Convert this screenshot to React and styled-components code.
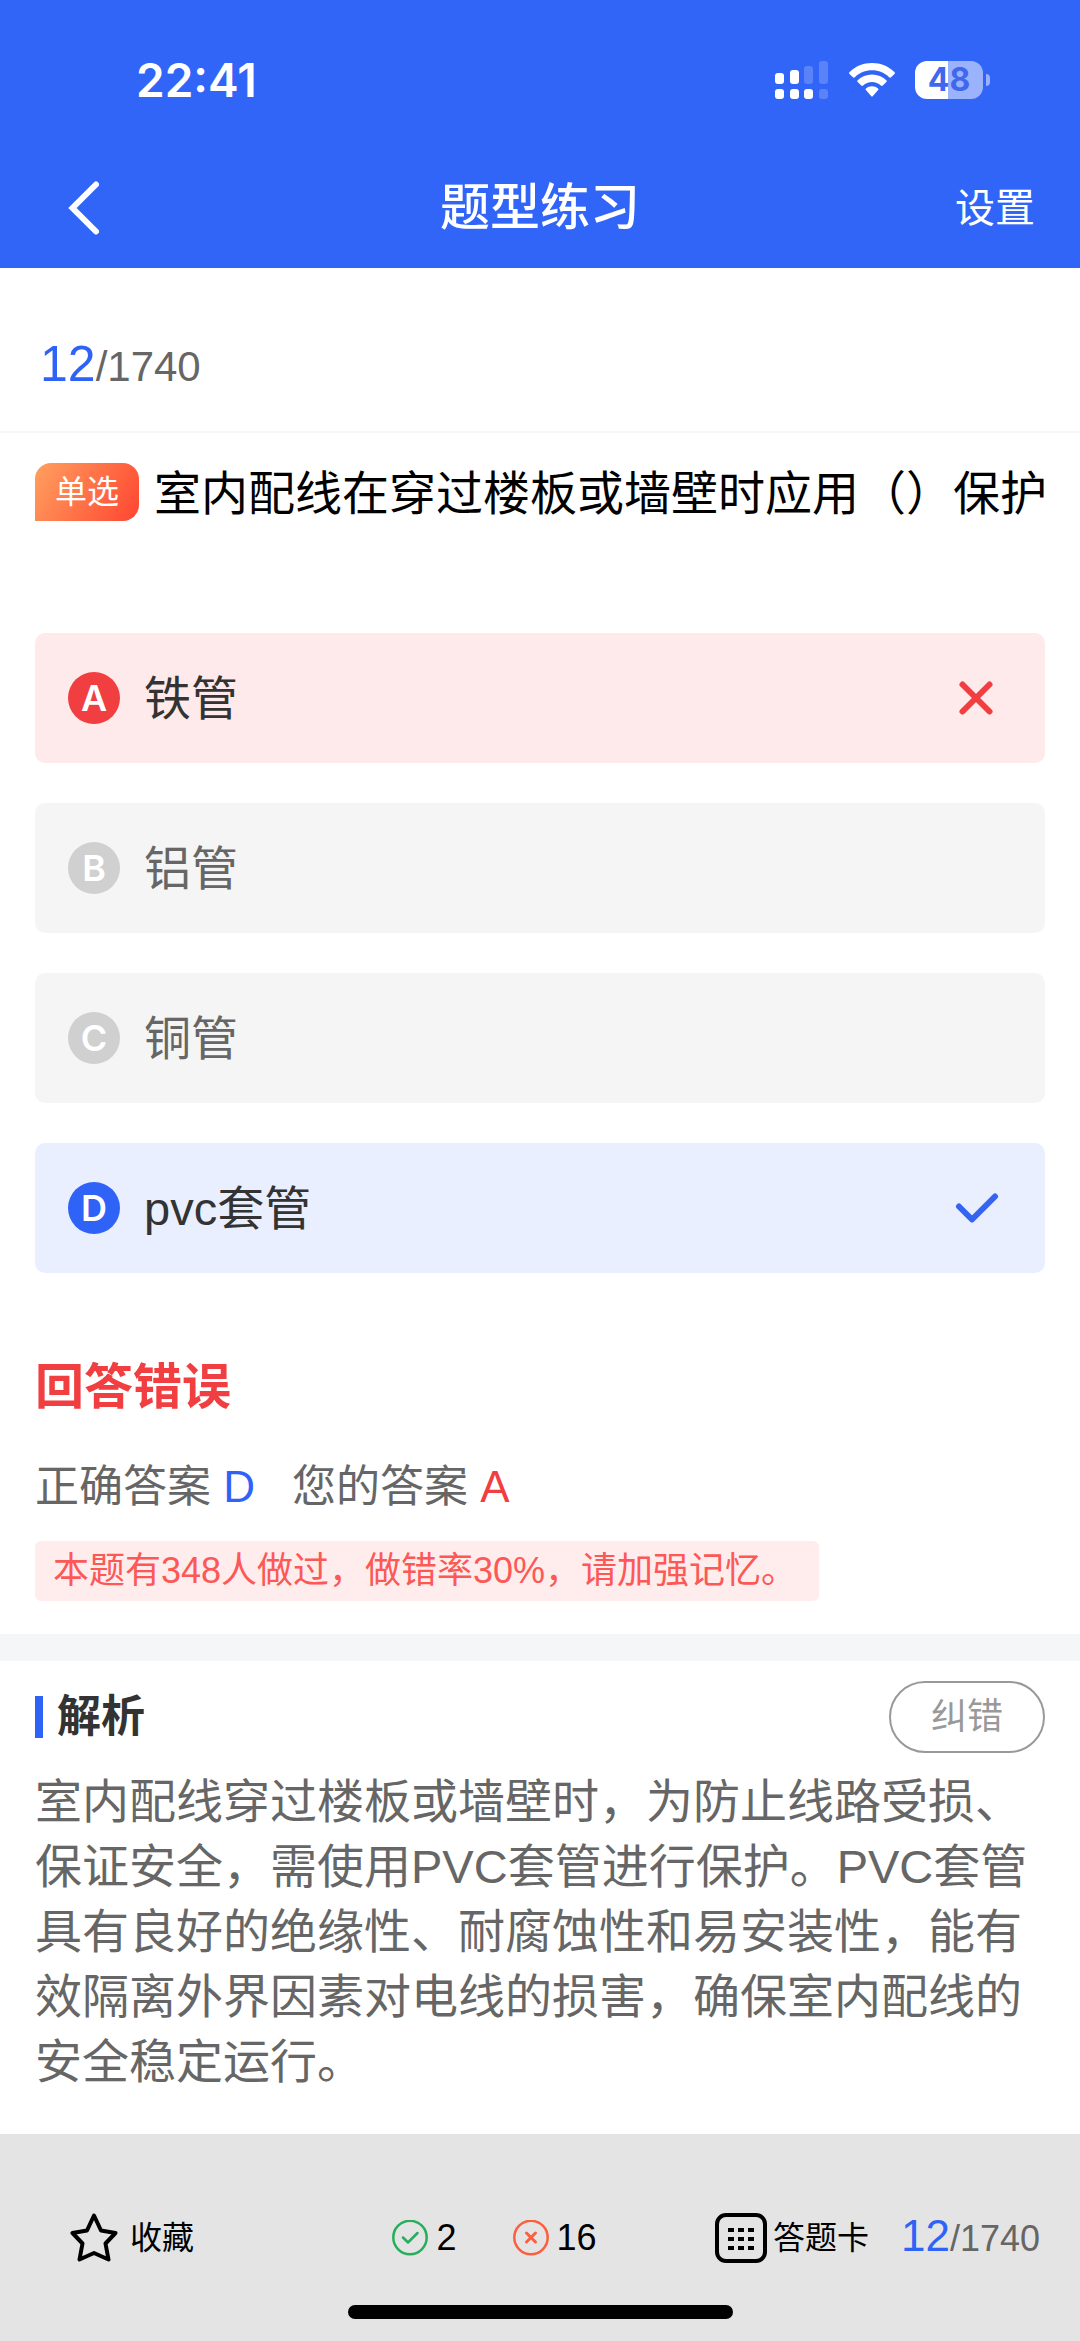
import styled, { createGlobalStyle } from 'styled-components';

const question = {
  index: 12,
  total: 1740,
  type: '单选',
  title: '室内配线在穿过楼板或墙壁时应用（）保护',
  options: [
    { key: 'A', text: '铁管', state: 'wrong' },
    { key: 'B', text: '铝管', state: 'idle' },
    { key: 'C', text: '铜管', state: 'idle' },
    { key: 'D', text: 'pvc套管', state: 'right' },
  ],
  answer: 'D',
  chosen: 'A',
  notice: '本题有348人做过，做错率30%，请加强记忆。',
  analysis:
    '室内配线穿过楼板或墙壁时，为防止线路受损、保证安全，需使用PVC套管进行保护。PVC套管具有良好的绝缘性、耐腐蚀性和易安装性，能有效隔离外界因素对电线的损害，确保室内配线的安全稳定运行。',
};

const optionColors = {
  wrong: { background: '#feeaea', badge: '#f03e41', text: '#333' },
  right: { background: '#e9effe', badge: '#2f63f7', text: '#333' },
  idle: { background: '#f5f5f5', badge: '#d0d0d0', text: '#666' },
};

const SignalIcon = () => (
  <svg width="54" height="38" viewBox="0 0 54 38" fill="#fff" aria-hidden="true">
    <rect x="0" y="12" width="9" height="11" rx="3" />
    <rect x="15" y="9" width="9" height="14" rx="3" />
    <rect x="29" y="5" width="9" height="18" rx="3" opacity=".2" />
    <rect x="44" y="0" width="9" height="23" rx="3" opacity=".2" />
    <rect x="0" y="28" width="9" height="10" rx="3" />
    <rect x="15" y="28" width="9" height="10" rx="3" />
    <rect x="29" y="28" width="9" height="10" rx="3" />
    <rect x="44" y="28" width="9" height="10" rx="3" opacity=".2" />
  </svg>
);

const WifiIcon = () => (
  <svg width="46" height="34" viewBox="0 0 46 34" fill="#fff" aria-hidden="true">
    <path d="M23 0C14.400 0 6.500 3.300 .600 8.900c-.700.700-.700 1.400-.100 2l3.400 3.300c.600.600 1.300.600 2 0C10.400 9.900 16.400 7.300 23 7.300s12.600 2.600 17.100 6.900c.700.600 1.400.600 2 0l3.400-3.300c.600-.600.600-1.300-.100-2C39.500 3.300 31.600 0 23 0z" />
    <path d="M23 11.600c-5.500 0-10.500 2.100-14.300 5.600-.600.600-.600 1.300 0 1.900l3.500 3.400c.600.600 1.300.600 1.900.1 2.400-2.200 5.500-3.500 8.900-3.500s6.500 1.300 8.900 3.500c.600.500 1.300.500 1.900-.1l3.500-3.400c.600-.600.600-1.300 0-1.900-3.800-3.500-8.800-5.600-14.300-5.600z" />
    <path d="M23 23.200c-2.300 0-4.400.800-6 2.200-.600.500-.600 1.200-.100 1.700l5.200 5.800c.600.700 1.200.700 1.800 0l5.200-5.800c.500-.500.500-1.200-.100-1.700-1.600-1.400-3.700-2.200-6-2.200z" />
  </svg>
);

const BackIcon = () => (
  <svg width="32" height="54" viewBox="0 0 32 54" fill="none" stroke="#fff" strokeWidth="6" strokeLinecap="round" aria-hidden="true">
    <path d="M29 3.500 5.500 27 29 50.500" />
  </svg>
);

const CrossIcon = () => (
  <svg width="44" height="44" viewBox="0 0 44 44" fill="none" stroke="#f03e41" strokeWidth="6" strokeLinecap="round" role="img" aria-label="错误">
    <path d="M7.500 8.500 34.500 35.500M34.500 8.500 7.500 35.500" />
  </svg>
);

const TickIcon = () => (
  <svg width="44" height="44" viewBox="0 0 44 44" fill="none" stroke="#3563f2" strokeWidth="6" strokeLinecap="round" strokeLinejoin="round" role="img" aria-label="正确">
    <path d="M4 20.500 17 33.500 40 10.500" />
  </svg>
);

const StarIcon = () => (
  <svg width="48" height="50" viewBox="0 0 48 50" fill="none" stroke="#000" strokeWidth="4" strokeLinejoin="round" aria-hidden="true">
    <path d="M24 2.500 31 17.500 45.500 20 35.500 30.500 38.500 46.500 24 40 9.500 46.500 12.500 30.500 2.500 20 17 17.500z" />
  </svg>
);

const RightCountIcon = () => (
  <svg width="36" height="36" viewBox="0 0 36 36" fill="none" stroke="#27ae5b" strokeWidth="2.500" strokeLinecap="round" strokeLinejoin="round" role="img" aria-label="答对">
    <circle cx="18" cy="17.500" r="16.700" />
    <path d="M11 17.500 16 22.500 25.500 13" />
  </svg>
);

const WrongCountIcon = () => (
  <svg width="36" height="36" viewBox="0 0 36 36" fill="none" stroke="#fb5f3e" strokeWidth="2.500" strokeLinecap="round" role="img" aria-label="答错">
    <circle cx="18" cy="17.500" r="16.700" />
    <path d="M13.500 13 22.500 22M22.500 13 13.500 22" strokeWidth="3" />
  </svg>
);

const CardIcon = () => (
  <svg width="52" height="50" viewBox="0 0 52 50" aria-hidden="true">
    <rect x="2" y="2" width="48" height="46" rx="9" fill="none" stroke="#000" strokeWidth="4" />
    {[15, 24, 33].map((y) =>
      [13, 23, 33].map((x) => <rect key={`${x}-${y}`} x={x} y={y} width="6" height="4" />)
    )}
  </svg>
);

const Progress = ({ size }) => (
  <Counter $size={size}>
    <em>{question.index}</em>/{question.total}
  </Counter>
);

const App = () => (
  <Page lang="zh-CN">
    <GlobalStyle />
    <Header>
      <StatusBar>
        <Time>22:41</Time>
        <StatusIcons>
          <SignalIcon />
          <WifiIcon />
          <Battery>
            <BatteryBody>48</BatteryBody>
            <BatteryCap />
          </Battery>
        </StatusIcons>
      </StatusBar>
      <NavBar>
        <BackButton type="button" aria-label="返回">
          <BackIcon />
        </BackButton>
        <Title>题型练习</Title>
        <SettingsButton type="button">设置</SettingsButton>
      </NavBar>
    </Header>

    <main>
      <ProgressBar>
        <Progress size="large" />
      </ProgressBar>

      <Question>
        <TypeBadge>{question.type}</TypeBadge>
        <h2>{question.title}</h2>
      </Question>

      <Options>
        {question.options.map((option) => (
          <Option key={option.key} type="button" $state={option.state}>
            <OptionKey $state={option.state}>{option.key}</OptionKey>
            <OptionText>{option.text}</OptionText>
            {option.state === 'wrong' && <CrossIcon />}
            {option.state === 'right' && <TickIcon />}
          </Option>
        ))}
      </Options>

      <Result>
        <h3>回答错误</h3>
        <Answers>
          <Answer $color="#2f63f7">
            正确答案 <b>{question.answer}</b>
          </Answer>
          <Answer $color="#f03e41">
            您的答案 <b>{question.chosen}</b>
          </Answer>
        </Answers>
        <Notice>{question.notice}</Notice>
      </Result>

      <Analysis>
        <AnalysisHead>
          <h3>解析</h3>
          <ReportButton type="button">纠错</ReportButton>
        </AnalysisHead>
        <p>{question.analysis}</p>
      </Analysis>
    </main>

    <Footer>
      <Toolbar>
        <ToolSlot>
          <ToolButton type="button" $gap={12}>
            <StarIcon />
            收藏
          </ToolButton>
        </ToolSlot>
        <ToolSlot>
          <Count>
            <RightCountIcon />2
          </Count>
          <Count>
            <WrongCountIcon />
            16
          </Count>
        </ToolSlot>
        <ToolButton type="button" $gap={6}>
          <CardIcon />
          答题卡
        </ToolButton>
        <Progress size="small" />
      </Toolbar>
      <HomeIndicator />
    </Footer>
  </Page>
);

export default App;

const GlobalStyle = createGlobalStyle`
  * {
    box-sizing: border-box;
    margin: 0;
    padding: 0;
  }

  body {
    background-color: #fff;
    font-family: "Liberation Sans", "Noto Sans CJK SC", sans-serif;
  }

  button {
    border: none;
    background: none;
    color: inherit;
    font: inherit;
    cursor: pointer;
  }

  svg {
    display: block;
    flex-shrink: 0;
  }
`;

const Page = styled.div`
  display: flex;
  flex-direction: column;
  min-height: 100vh;
  color: #333;
`;

const Header = styled.header`
  background-color: #3165f8;
  color: #fff;
`;

const StatusBar = styled.div`
  display: flex;
  align-items: center;
  justify-content: space-between;
  padding: 50px 90px 0 136px;
  height: 110px;
`;

const Time = styled.time`
  font-family: Inter, sans-serif;
  font-size: 46px;
  font-weight: 600;
  line-height: 60px;
`;

const StatusIcons = styled.div`
  display: flex;
  align-items: center;
  gap: 20px;
`;

const Battery = styled.div`
  display: flex;
  align-items: center;
  gap: 3px;
`;

const BatteryBody = styled.span`
  width: 68px;
  height: 38px;
  border-radius: 12px;
  background: linear-gradient(to right, #fff 48%, #9bb2fc 48%);
  color: #3f68ee;
  font-family: Inter, sans-serif;
  font-size: 32px;
  font-weight: 700;
  line-height: 38px;
  text-align: center;
`;

const BatteryCap = styled.span`
  width: 4px;
  height: 12px;
  border-radius: 0 4px 4px 0;
  background-color: #9bb2fc;
`;

const NavBar = styled.nav`
  display: grid;
  grid-template-columns: 1fr auto 1fr;
  align-items: center;
  height: 158px;
  padding: 38px 45px 0;
`;

const BackButton = styled.button`
  justify-self: start;
  padding: 0 22px;
`;

const Title = styled.h1`
  font-size: 50px;
  font-weight: 500;
  line-height: 60px;
`;

const SettingsButton = styled.button`
  justify-self: end;
  font-size: 40px;
  line-height: 60px;
`;

const Counter = styled.span`
  color: #666;
  font-size: ${({ $size }) => ($size === 'large' ? 42 : 36)}px;
  line-height: 60px;
  white-space: nowrap;

  em {
    color: #2f63f7;
    font-size: ${({ $size }) => ($size === 'large' ? 50 : 44)}px;
    font-style: normal;
  }
`;

const ProgressBar = styled.div`
  display: flex;
  align-items: center;
  height: 165px;
  padding: 32px 40px 0;
  border-bottom: 2px solid #f7f7f7;
`;

const Question = styled.section`
  display: flex;
  align-items: flex-start;
  gap: 15px;
  padding: 30px 30px 0 35px;

  h2 {
    color: #000;
    font-size: 47px;
    font-weight: 400;
    line-height: 62px;
  }
`;

const TypeBadge = styled.span`
  flex-shrink: 0;
  padding: 0 20px;
  border-radius: 16px 16px 16px 0;
  background: linear-gradient(120deg, #ffa060, #ff4530);
  color: #fff;
  font-size: 32px;
  line-height: 58px;
`;

const Options = styled.div`
  display: flex;
  flex-direction: column;
  gap: 40px;
  padding: 108px 35px 0;
`;

const Option = styled.button`
  display: flex;
  align-items: center;
  gap: 24px;
  height: 130px;
  padding: 0 46px 0 33px;
  border-radius: 10px;
  background-color: ${({ $state }) => optionColors[$state].background};
  color: ${({ $state }) => optionColors[$state].text};
  text-align: left;
`;

const OptionKey = styled.span`
  width: 52px;
  height: 52px;
  border-radius: 50%;
  background-color: ${({ $state }) => optionColors[$state].badge};
  color: #fff;
  font-family: Inter, sans-serif;
  font-size: 36px;
  font-weight: 600;
  line-height: 52px;
  text-align: center;
`;

const OptionText = styled.span`
  flex: 1;
  padding-top: 2px;
  font-size: 47px;
  line-height: 60px;
`;

const Result = styled.section`
  padding: 84px 35px 33px;

  h3 {
    color: #f03e41;
    font-size: 49px;
    font-weight: 700;
    line-height: 60px;
  }
`;

const Answers = styled.div`
  display: flex;
  gap: 37px;
  margin-top: 40px;
`;

const Answer = styled.p`
  color: #666;
  font-size: 44px;
  line-height: 60px;

  b {
    color: ${({ $color }) => $color};
    font-weight: 400;
  }
`;

const Notice = styled.p`
  width: fit-content;
  margin-top: 24px;
  padding: 0 22px 0 18px;
  border-radius: 6px;
  background-color: #ffecec;
  color: #fb5856;
  font-size: 36px;
  line-height: 60px;
`;

const Analysis = styled.section`
  padding: 20px 35px 40px;
  border-top: 27px solid #f4f7f8;

  p {
    margin-top: 16px;
    color: #666;
    font-size: 47px;
    line-height: 65px;
  }
`;

const AnalysisHead = styled.div`
  display: flex;
  align-items: center;
  justify-content: space-between;

  h3 {
    padding-left: 14px;
    border-left: 8px solid #2f63f7;
    font-size: 44px;
    font-weight: 700;
    line-height: 42px;
  }
`;

const ReportButton = styled.button`
  padding: 0 40px;
  border: 2px solid #999;
  border-radius: 36px;
  color: #999;
  font-size: 36px;
  line-height: 68px;
`;

const Footer = styled.footer`
  margin-top: auto;
  padding: 72px 0 24px;
  background-color: #e4e4e4;
`;

const Toolbar = styled.div`
  display: flex;
  align-items: center;
  padding: 0 40px 0 70px;
  color: #000;

  > :last-child {
    margin-left: 32px;
  }
`;

const ToolSlot = styled.div`
  display: flex;
  flex: 1;
  gap: 56px;
`;

const ToolButton = styled.button`
  display: flex;
  align-items: center;
  gap: ${({ $gap }) => $gap}px;
  font-size: 32px;
  line-height: 60px;
`;

const Count = styled.span`
  display: flex;
  align-items: center;
  gap: 8px;
  font-size: 36px;
  line-height: 60px;
`;

const HomeIndicator = styled.div`
  width: 385px;
  height: 14px;
  margin: 36px auto 0;
  border-radius: 7px;
  background-color: #000;
`;
